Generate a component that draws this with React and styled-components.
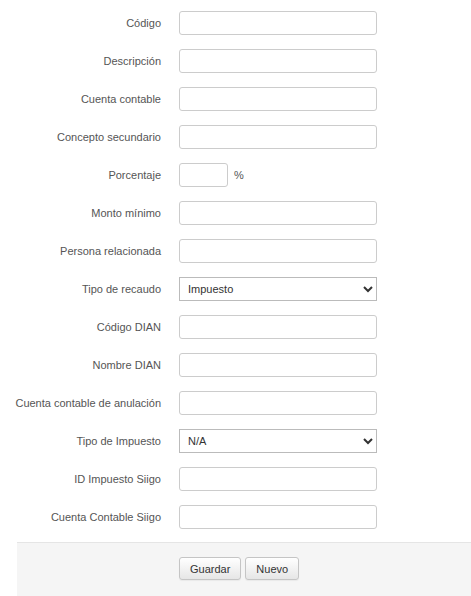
import React from 'react'
import styled, { createGlobalStyle } from 'styled-components'

const Global = createGlobalStyle`
  body {
    margin: 0;
    background: #fff;
    font-family: "Liberation Sans", Arial, sans-serif;
    font-size: 11px;
    color: #555;
  }
`

const fields = [
  { label: 'Código' },
  { label: 'Descripción' },
  { label: 'Cuenta contable' },
  { label: 'Concepto secundario' },
  { label: 'Porcentaje', kind: 'percent' },
  { label: 'Monto mínimo' },
  { label: 'Persona relacionada' },
  { label: 'Tipo de recaudo', kind: 'select', options: ['Impuesto', 'Retención'] },
  { label: 'Código DIAN' },
  { label: 'Nombre DIAN' },
  { label: 'Cuenta contable de anulación' },
  { label: 'Tipo de Impuesto', kind: 'select', options: ['N/A', 'IVA'] },
  { label: 'ID Impuesto Siigo' },
  { label: 'Cuenta Contable Siigo' },
]

const App = () => {
  return (
    <>
      <Global />
      <Form>
        <Rows>
          {fields.map((f) => (
            <Row key={f.label}>
              <Label>{f.label}</Label>
              <Controls>
                {f.kind === 'select' ? (
                  <Select defaultValue={f.options[0]}>
                    {f.options.map((o) => (
                      <option key={o}>{o}</option>
                    ))}
                  </Select>
                ) : f.kind === 'percent' ? (
                  <>
                    <Input $small type="text" />
                    <Unit>%</Unit>
                  </>
                ) : (
                  <Input type="text" />
                )}
              </Controls>
            </Row>
          ))}
        </Rows>
        <Actions>
          <Button type="button">Guardar</Button>
          <Button type="button">Nuevo</Button>
        </Actions>
      </Form>
    </>
  )
}

const Form = styled.form`
  width: 471px;
  padding-top: 11px;
`
const Rows = styled.div`
  display: flex;
  flex-direction: column;
  gap: 14px;
`
const Row = styled.div`
  display: grid;
  grid-template-columns: 161px 1fr;
  column-gap: 18px;
  align-items: center;
  height: 24px;
`
const Label = styled.label`
  text-align: right;
  white-space: nowrap;
  color: #555;
  font-size: 11px;
`
const Controls = styled.div`
  display: flex;
  align-items: center;
  gap: 6px;
`
const Input = styled.input`
  box-sizing: border-box;
  width: ${(p) => (p.$small ? '49px' : '198px')};
  height: 24px;
  border: 1px solid #ccc;
  border-radius: 3px;
  padding: 2px 6px;
  font-family: inherit;
  font-size: 11px;
  color: #555;
  outline: none;
`
const Unit = styled.span`
  color: #555;
  font-size: 11px;
`
const Select = styled.select`
  box-sizing: border-box;
  width: 198px;
  height: 24px;
  border: 1px solid #bbb;
  border-radius: 0;
  padding: 0 4px;
  background: #fff;
  font-family: inherit;
  font-size: 11px;
  color: #333;
`
const Actions = styled.div`
  margin: 13px 0 0 17px;
  padding: 14px 0 20px 162px;
  background: #f5f5f5;
  border-top: 1px solid #e5e5e5;
  display: flex;
  gap: 4px;
`
const Button = styled.button`
  height: 23px;
  padding: 0 10px;
  font-family: inherit;
  font-size: 11px;
  color: #333;
  border: 1px solid #c5c5c5;
  border-radius: 3px;
  background: linear-gradient(#ffffff, #e6e6e6);
  box-shadow: 0 1px 1px rgba(0, 0, 0, 0.05);
`

export default App
